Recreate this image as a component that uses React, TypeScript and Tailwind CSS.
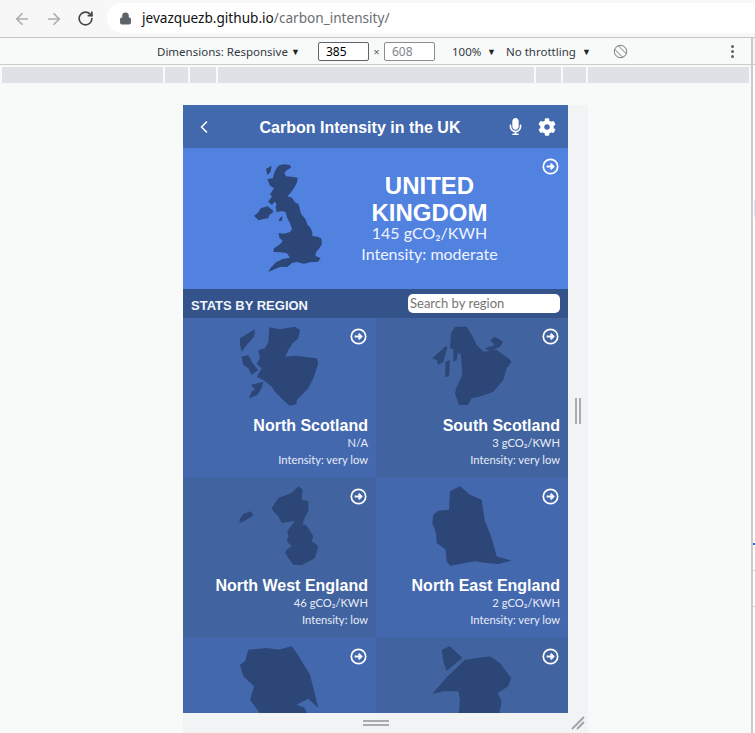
import { FaCog, FaMicrophone } from "react-icons/fa";
import { ArrowLeft, ArrowRight, ChevronLeft, Lock, RotateCw } from "lucide-react";

const ArrowCircle = ({ className }: { className: string }) => (
  <svg viewBox="0 0 17 17" className={className}>
    <circle cx="8.5" cy="8.5" r="7.2" fill="none" stroke="#ffffff" strokeWidth="1.7" />
    <path d="M4.6 8.5H11M8.6 5.6L11.5 8.5L8.6 11.4" fill="none" stroke="#ffffff" strokeWidth="1.9" />
  </svg>
);

type Card = { name?: string; value?: string; intensity?: string; view: string; dark: boolean; d: string };

const cards: Card[] = [
  {
    name: "North Scotland",
    value: "N/A",
    intensity: "Intensity: very low",
    view: "9 84 579 291",
    dark: false,
    d: "M268 112L300 118L345 110L360 120L355 145L338 160L325 180L316 200L345 197L410 205L415 220L400 265L385 295L350 330L350 342L330 347L315 335L285 305L275 290L250 270L230 260L245 235L230 222L240 205L235 180L255 175L265 155ZM185 200L205 195L218 220L235 240L215 255L205 235L190 225ZM180 145L205 130L225 118L222 140L200 165L185 185L180 165ZM212 285L250 275L245 295L232 315L207 325L215 305L225 298Z",
  },
  {
    name: "South Scotland",
    value: "3 gCO₂/KWH",
    intensity: "Intensity: very low",
    view: "3 84 576 291",
    dark: true,
    d: "M240 110L275 110L290 135L305 165L325 185L365 180L400 205L410 215L395 235L385 270L355 305L320 318L290 325L278 345L252 345L240 310L245 290L262 255L260 225L258 195L240 180L225 175L228 130ZM330 175L360 165L345 150L360 140L385 155L375 170L345 185ZM172 205L210 170L218 170L205 215L190 225L185 210ZM212 215L225 210L222 258L210 262ZM235 170L250 175L245 210L235 215Z",
  },
  {
    name: "North West England",
    value: "46 gCO₂/KWH",
    intensity: "Intensity: low",
    view: "9 0 579 291",
    dark: true,
    d: "M178 125L190 108L212 100L220 112L195 128L180 135ZM275 90L295 60L335 45L355 25L368 35L365 65L385 70L385 100L372 122L368 140L378 140L400 175L395 190L415 205L405 240L365 262L340 260L315 225L320 215L335 205L320 190L325 175L322 160L335 142L345 128L305 135L295 115L280 100Z",
  },
  {
    name: "North East England",
    value: "2 gCO₂/KWH",
    intensity: "Intensity: very low",
    view: "3 0 576 291",
    dark: false,
    d: "M255 25L285 50L320 65L330 130L350 180L365 235L410 248L370 258L335 255L300 250L225 263L215 250L212 215L185 195L183 165L172 135L175 110L190 98L222 95L225 40Z",
  },
  {
    view: "9 480 579 291",
    dark: false,
    d: "M205 515L260 510L295 515L335 505L350 525L390 590L415 690L385 662L350 680L372 688L390 720L250 720L210 665L222 625L190 595L180 560L195 550Z",
  },
  {
    view: "3 480 576 291",
    dark: true,
    d: "M200 515L225 505L262 540L215 578L205 550ZM172 648L215 598L270 545L345 535L375 555L408 600L400 625L368 645L380 670L370 720L250 720L255 665L250 640L205 640Z",
  },
];

const rulerSegments = ["w-[161px]", "w-[23px]", "w-[26px]", "w-[316px]", "w-[25px]", "w-[23px]", "w-[161px]"];

export default function App() {
  return (
    <div className="flex h-[733px] w-[755px] flex-col overflow-hidden bg-[#f8faf9] font-['Liberation_Sans',sans-serif]">
      <header className="flex h-[38px] shrink-0 items-center border-b border-[#c4c7c9] bg-[#f7f7f7] pl-[13px]">
        <ArrowLeft className="h-[18px] w-[18px] text-[#aaaeb2]" strokeWidth={2.3} />
        <ArrowRight className="ml-[14px] h-[18px] w-[18px] text-[#aaaeb2]" strokeWidth={2.3} />
        <RotateCw className="ml-[14px] h-[17px] w-[17px] text-[#444746]" strokeWidth={2.4} />
        <div className="ml-[13px] mb-[1px] flex h-[30px] flex-1 items-center rounded-l-full bg-white pl-[12px] font-['Noto_Sans',sans-serif] text-[13.6px]">
          <Lock className="h-[13px] w-[13px] fill-[#5f6368] text-[#5f6368]" strokeWidth={2} />
          <span className="ml-[10px] text-[#111111]">jevazquezb.github.io</span>
          <span className="text-[#6a6e72]">/carbon_intensity/</span>
        </div>
      </header>

      <div className="flex min-h-0 flex-1">
        <div className="flex w-[751px] flex-col">
          <div className="flex h-[27px] shrink-0 items-center whitespace-nowrap border-b border-[#c9cbcc] pl-[157px] pt-[1px] font-['Noto_Sans',sans-serif] text-[11.5px] text-[#303942]">
            <span className="w-[130px]">Dimensions: Responsive</span>
            <span className="ml-[4px] w-[9px] text-[9px] text-[#222222]">▼</span>
            <span className="ml-[18px] flex h-[19px] w-[51px] items-center rounded-[2px] border border-[#5f6368] bg-white pl-[7px] text-[12px] text-black">385</span>
            <span className="w-[15px] text-center text-[#5f6368]">×</span>
            <span className="flex h-[19px] w-[51px] items-center rounded-[2px] border border-[#8a8d90] bg-white pl-[7px] text-[12px] text-[#80868b]">608</span>
            <span className="ml-[17px] w-[30px]">100%</span>
            <span className="ml-[5px] w-[9px] text-[9px] text-[#222222]">▼</span>
            <span className="ml-[10px] w-[72px]">No throttling</span>
            <span className="ml-[4px] w-[9px] text-[9px] text-[#222222]">▼</span>
            <svg viewBox="0 0 16 16" className="ml-[22px] h-[15px] w-[15px]">
              <circle cx="8" cy="8" r="6.6" fill="none" stroke="#6e7175" strokeWidth="1" />
              <path d="M1.8 5.6L10.4 14.2M5.6 1.8L14.2 10.4" fill="none" stroke="#6e7175" strokeWidth="1" />
            </svg>
            <div className="ml-[103px] flex flex-col gap-[2px]">
              <span className="h-[3px] w-[3px] rounded-full bg-[#5f6368]" />
              <span className="h-[3px] w-[3px] rounded-full bg-[#5f6368]" />
              <span className="h-[3px] w-[3px] rounded-full bg-[#5f6368]" />
            </div>
          </div>

          <div className="mt-[2px] flex h-[16px] shrink-0 gap-[2px] pl-[2px]">
            {rulerSegments.map((w, i) => (
              <div key={i} className={`${w} bg-[#dee1e6]`} />
            ))}
          </div>

          <main className="flex min-h-0 flex-1 pl-[183px] pt-[22px]">
            <div className="flex w-[405px] flex-col bg-[#f1f3f4]">
              <div className="flex min-h-0 flex-1">
                <div className="flex w-[385px] flex-col overflow-hidden">
                  <div className="relative flex h-[43px] shrink-0 items-center justify-center bg-[#4268ae] text-[16px] font-bold text-white">
                    <ChevronLeft className="absolute left-[11px] h-[20px] w-[20px]" strokeWidth={2} />
                    <span className="ml-[-31px] mt-[3px]">Carbon Intensity in the UK</span>
                    <FaMicrophone className="absolute left-[326px] h-[17px] w-[13px]" />
                    <FaCog className="absolute left-[355px] h-[18px] w-[18px]" />
                  </div>

                  <section className="relative flex h-[141px] shrink-0 bg-[#5282e0] text-white">
                    <ArrowCircle className="absolute right-[9px] top-[10px] h-[17px] w-[17px]" />
                    <svg viewBox="0 0 330 375" className="ml-[47px] mt-[7px] h-[125px] w-[110px] shrink-0">
                      <path
                        fill="#2c4677"
                        d="M145 32L160 28L180 30L183 38L170 46L163 54L168 64L190 66L203 68L201 82L194 96L186 108L178 118L172 124L186 128L195 142L206 148L210 165L214 178L226 192L233 210L240 216L247 232L247 243L262 245L274 250L276 268L268 280L258 292L256 302L272 310L264 320L240 322L222 326L200 321L186 324L172 336L152 335L135 342L115 351L122 338L138 322L158 312L180 308L170 294L150 292L130 291L132 280L150 268L158 258L148 248L146 234L162 236L180 231L186 222L180 205L172 190L167 172L155 168L140 172L137 155L140 148L134 140L126 150L114 140L126 125L120 118L132 100L120 92L112 72L128 70L134 50L140 40ZM72 182L85 172L92 160L112 154L128 165L130 172L118 180L115 190L100 192L85 196L78 188ZM108 42L125 32L122 50L112 60ZM150 188L158 184L155 198L146 198Z"
                      />
                    </svg>
                    <div className="ml-[2px] flex w-[175px] flex-col items-center pt-[24px] text-center">
                      <h1 className="text-[24px] font-bold leading-[27px]">
                        UNITED
                        <br />
                        KINGDOM
                      </h1>
                      <p className="font-['Lato',sans-serif] text-[16px] leading-[14px] text-[#eef3ff]">145 gCO₂/KWH</p>
                      <p className="mt-[3px] font-['Lato',sans-serif] text-[16px] leading-[22px] text-[#eef3ff]">Intensity: moderate</p>
                    </div>
                  </section>

                  <div className="flex h-[29px] shrink-0 items-center justify-between bg-[#34538a] pl-[8px] pr-[8px]">
                    <span className="mt-[4px] text-[13px] font-bold text-[#f2f5fb]">STATS BY REGION</span>
                    <input
                      readOnly
                      placeholder="Search by region"
                      className="mb-[1px] h-[19px] w-[152px] rounded-[5px] bg-white pl-[2px] pt-[1px] font-['Lato',sans-serif] text-[13px] placeholder:text-[#757575]"
                    />
                  </div>

                  <div className="grid grid-cols-[193px_192px]">
                    {cards.map((c) => (
                      <article key={c.view} className={`relative h-[160px] ${c.dark ? "bg-[#41639f]" : "bg-[#4468ae]"} text-right text-white`}>
                        <ArrowCircle className="absolute right-[9px] top-[10px] h-[17px] w-[17px]" />
                        <svg viewBox={c.view} className="h-[97px] w-full">
                          <path fill="#2c4677" d={c.d} />
                        </svg>
                        {c.name && (
                          <div className="pr-[8px] pt-[2px]">
                            <h2 className="text-[16px] font-bold leading-[18px]">{c.name}</h2>
                            <p className="mt-[-1px] font-['Lato',sans-serif] text-[11.2px] leading-[17px] text-[#e6ecf8]">{c.value}</p>
                            <p className="font-['Lato',sans-serif] text-[11.2px] leading-[17px] text-[#e6ecf8]">{c.intensity}</p>
                          </div>
                        )}
                      </article>
                    ))}
                  </div>
                </div>
                <div className="flex w-[20px] items-center justify-center pt-[3px]">
                  <div className="h-[26px] w-[6px] border-x-2 border-[#a9abad]" />
                </div>
              </div>
              <div className="relative flex h-[20px] shrink-0 items-center justify-center pr-[20px]">
                <div className="h-[6px] w-[26px] border-y-2 border-[#a9abad]" />
                <svg viewBox="0 0 14 14" className="absolute right-[3px] top-[3px] h-[14px] w-[14px]">
                  <path d="M1 13L13 1M6 13L13 6" stroke="#a0a2a4" strokeWidth="1.8" fill="none" />
                </svg>
              </div>
            </div>
          </main>
        </div>
        <aside className="flex w-[4px] flex-col border-l-2 border-[#c9cbcc] bg-white">
          <div className="h-[27px] shrink-0 border-b border-[#c9cbcc] bg-[#f5f5f5]" />
          <div className="mt-[135px] ml-[1px] h-[17px] shrink-0 bg-[#cfe8fc]" />
          <div className="mt-[326px] h-[2px] shrink-0 bg-[#1a73e8]" />
          <div className="mt-[25px] h-[1px] shrink-0 bg-[#d0d2d4]" />
          <div className="mt-[35px] h-[1px] shrink-0 bg-[#d0d2d4]" />
        </aside>
      </div>
    </div>
  );
}
